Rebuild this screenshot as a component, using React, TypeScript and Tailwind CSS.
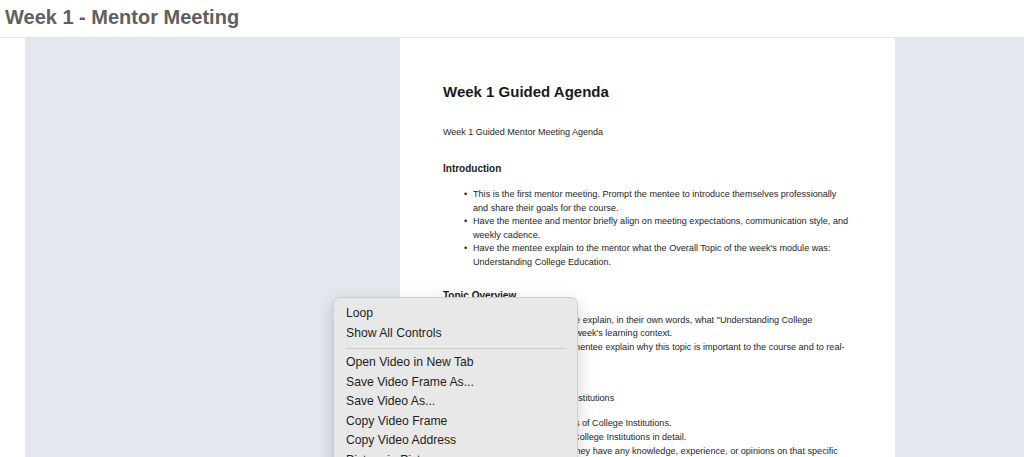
import React from 'react';

const menuGroups: string[][] = [
  ['Loop', 'Show All Controls'],
  [
    'Open Video in New Tab',
    'Save Video Frame As...',
    'Save Video As...',
    'Copy Video Frame',
    'Copy Video Address',
    'Picture in Picture',
  ],
];

const introLines: string[][] = [
  [
    'This is the first mentor meeting. Prompt the mentee to introduce themselves professionally',
    'and share their goals for the course.',
  ],
  [
    'Have the mentee and mentor briefly align on meeting expectations, communication style, and',
    'weekly cadence.',
  ],
  [
    "Have the mentee explain to the mentor what the Overall Topic of the week's module was:",
    'Understanding College Education.',
  ],
];

const overviewLines: string[][] = [
  [
    'To begin, have the mentee explain, in their own words, what "Understanding College',
    'Education" means in this week\'s learning context.',
  ],
  [
    'As a follow-up, have the mentee explain why this topic is important to the course and to real-',
    'world situations.',
  ],
];

const institutionLines: string[][] = [
  ['Discuss the different types of College Institutions.'],
  ['Explore one of the listed College Institutions in detail.'],
  ['Lastly, ask the mentee if they have any knowledge, experience, or opinions on that specific'],
];

const Bullets: React.FC<{ items: string[][]; className?: string }> = ({ items, className }) => (
  <ul className={className}>
    {items.map((lines, i) => (
      <li key={i} className="flex">
        <span className="w-[30px] shrink-0 pl-[21px] text-[9px] leading-[13.6px]">•</span>
        <div>
          {lines.map((l, j) => (
            <div key={j} className="whitespace-nowrap text-[9.1px] leading-[13.6px] text-[#262626]">
              {l}
            </div>
          ))}
        </div>
      </li>
    ))}
  </ul>
);

const ContextMenu: React.FC = () => (
  <div className="absolute left-[333px] top-[297px] w-[245px] rounded-[7px] border border-[#cfcfcf] bg-[#e8e8e8] pt-[6px] pb-2 shadow-[0_6px_18px_rgba(0,0,0,0.18)]">
    {menuGroups.map((group, gi) => (
      <div key={gi}>
        {gi > 0 && <div className="mx-[12px] my-[4.5px] h-px bg-[#cdcdcd]" />}
        {group.map(item => (
          <div key={item} className="px-[12px] text-[12.2px] leading-[19.5px] text-[#1e1e1e]">
            {item}
          </div>
        ))}
      </div>
    ))}
  </div>
);

export default function App() {
  return (
    <div className="relative flex h-[457px] w-full flex-col overflow-hidden bg-white font-['Liberation_Sans',Arial,sans-serif]">
      <div className="h-[38px] shrink-0 border-b border-[#e6e6e6] px-[5px]">
        <h1 className="pt-[5px] text-[20px] font-bold leading-[24px] text-[#606060]">Week 1 - Mentor Meeting</h1>
      </div>

      <div className="ml-[25px] flex flex-1 bg-[#e3e7ee] pl-[375px]">
        <div className="w-[495px] bg-white pl-[43px] pt-[44px] text-[#222]">
          <h2 className="text-[15px] font-bold leading-[20px] text-[#1a1a1a]">Week 1 Guided Agenda</h2>
          <p className="mt-[23.5px] text-[9px] leading-[13px] text-[#262626]">Week 1 Guided Mentor Meeting Agenda</p>

          <h3 className="mt-[23.5px] text-[10px] font-bold leading-[14px] text-[#1a1a1a]">Introduction</h3>
          <Bullets items={introLines} className="mt-[12px]" />

          <h3 className="mt-[19px] text-[10px] font-bold leading-[14px] text-[#1a1a1a]">Topic Overview</h3>
          <Bullets items={overviewLines} className="mt-[11px]" />

          <p className="mt-[24.5px] text-[9.1px] leading-[13.5px] text-[#262626]">Understanding Various College Institutions</p>
          <Bullets items={institutionLines} className="mt-[11.5px]" />
        </div>
      </div>

      <ContextMenu />
    </div>
  );
}
